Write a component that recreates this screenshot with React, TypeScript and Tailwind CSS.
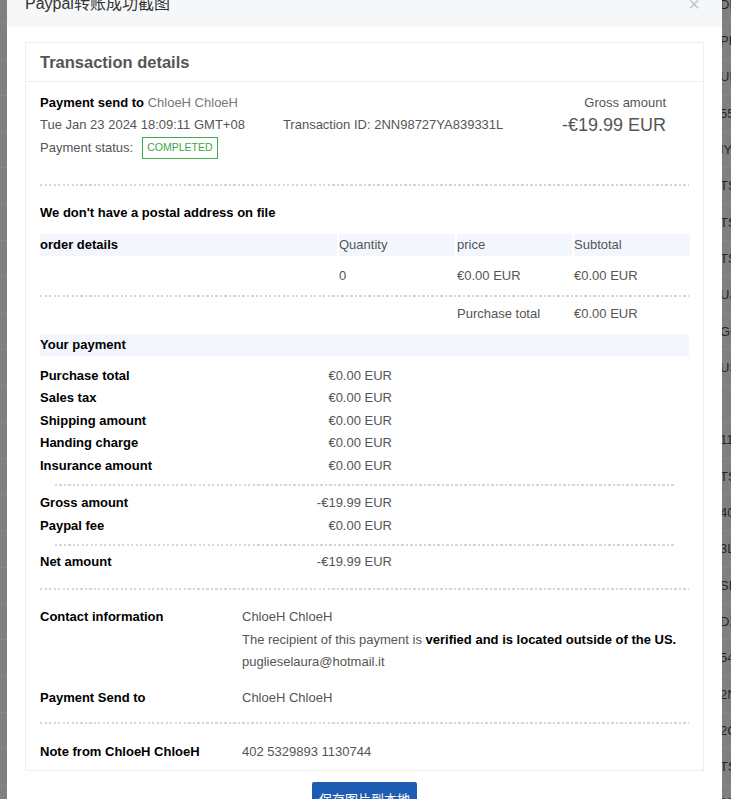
import React from "react";

const sideRows = [
  "DE", "PF", "UL", "55", "IY", "TS", "TS", "TS", "UJ", "GM", "US", "",
  "11", "TS", "40", "3L", "SE", "DX", "54", "2N", "2C", "TS", "11",
];

const paymentRows = [
  ["Purchase total", "€0.00 EUR"],
  ["Sales tax", "€0.00 EUR"],
  ["Shipping amount", "€0.00 EUR"],
  ["Handing charge", "€0.00 EUR"],
  ["Insurance amount", "€0.00 EUR"],
];

function Dotted({ inset = false, className = "" }: { inset?: boolean; className?: string }) {
  return (
    <div
      className={`h-[2px] bg-[repeating-linear-gradient(90deg,#d3d5da_0_2px,transparent_2px_4.5px)] ${inset ? "mx-[15px]" : ""} ${className}`}
    />
  );
}

function BackdropRows({ showText }: { showText: boolean }) {
  return (
    <div className="flex flex-col -mt-[13px]">
      {sideRows.map((t, i) => (
        <div
          key={i}
          className="h-[36.3px] shrink-0 flex items-center border-b border-[#878787] text-[13px] text-[#262626] -ml-[2px] whitespace-nowrap"
        >
          {showText ? t : ""}
        </div>
      ))}
    </div>
  );
}

export default function App() {
  return (
    <div className="flex h-[799px] overflow-hidden bg-[#808080] font-['Liberation_Sans','Noto_Sans_CJK_SC',sans-serif]">
      <div className="w-[7px] shrink-0 overflow-hidden">
        <BackdropRows showText={false} />
      </div>

      <div className="w-[715px] shrink-0 bg-white -mt-[20px] flex flex-col">
        {/* modal header */}
        <div className="h-[47px] shrink-0 bg-[#f6f7f9] flex items-center justify-between pl-[18px] pr-[22px]">
          <span className="text-[16px] text-[#333]">Paypal转账成功截图</span>
          <span className="text-[20px] leading-none text-[#c4c6ca]">×</span>
        </div>

        <div className="px-[18px] pt-[15px]">
          {/* card */}
          <div className="border border-[#eceef2]">
            <div className="h-[39px] border-b border-[#eceef2] px-[14px] flex items-center">
              <span className="text-[16.5px] font-bold text-[#555]">Transaction details</span>
            </div>

            <div className="px-[14px] pt-[10px] pb-[7px] text-[13px] text-[#555]">
              {/* summary */}
              <div className="flex">
                <div className="flex-1">
                  <div className="leading-[22px]">
                    <span className="font-bold text-black">Payment send to</span>{" "}
                    <span className="text-[#777]">ChloeH ChloeH</span>
                  </div>
                  <div className="leading-[22px] flex gap-[38px]">
                    <span>Tue Jan 23 2024 18:09:11 GMT+08</span>
                    <span>Transaction ID: 2NN98727YA839331L</span>
                  </div>
                  <div className="flex items-center gap-[9px] mt-[1px] h-[22px]">
                    <span>Payment status:</span>
                    <span className="border border-[#43ad4f] text-[#3aa846] text-[10.5px] px-[4px] h-[22px] flex items-center">
                      COMPLETED
                    </span>
                  </div>
                </div>
                <div className="text-right pr-[23px]">
                  <div className="leading-[22px]">Gross amount</div>
                  <div className="leading-[22px] text-[18px]">-€19.99 EUR</div>
                </div>
              </div>

              <Dotted className="mt-[25px]" />

              <div className="mt-[16px] leading-[22px] font-bold text-black">
                We don't have a postal address on file
              </div>

              {/* order table */}
              <div className="mt-[10px] grid grid-cols-[297px_116px_115px_116px] gap-x-[2px]">
                <div className="h-[22px] leading-[22px] bg-[#f4f6fd] font-bold text-black">order details</div>
                <div className="h-[22px] leading-[22px] bg-[#f4f6fd]">Quantity</div>
                <div className="h-[22px] leading-[22px] bg-[#f4f6fd]">price</div>
                <div className="h-[22px] leading-[22px] bg-[#f4f6fd]">Subtotal</div>
              </div>
              <div className="mt-[9px] grid grid-cols-[297px_116px_115px_116px] gap-x-[2px] leading-[22px]">
                <div />
                <div>0</div>
                <div>€0.00 EUR</div>
                <div>€0.00 EUR</div>
              </div>
              <Dotted className="mt-[8px]" />
              <div className="mt-[6px] grid grid-cols-[297px_116px_115px_116px] gap-x-[2px] leading-[22px]">
                <div />
                <div />
                <div>Purchase total</div>
                <div>€0.00 EUR</div>
              </div>

              <div className="mt-[9px] h-[22px] leading-[22px] bg-[#f4f6fd] font-bold text-black">
                Your payment
              </div>

              {/* payment breakdown */}
              <div className="mt-[9px] grid grid-cols-[200px_152px] leading-[22.4px]">
                {paymentRows.map(([label, value]) => (
                  <React.Fragment key={label}>
                    <div className="font-bold text-black">{label}</div>
                    <div className="text-right">{value}</div>
                  </React.Fragment>
                ))}
              </div>
              <Dotted inset className="mt-[7px]" />
              <div className="mt-[6px] grid grid-cols-[200px_152px] leading-[22.5px]">
                <div className="font-bold text-black">Gross amount</div>
                <div className="text-right">-€19.99 EUR</div>
                <div className="font-bold text-black">Paypal fee</div>
                <div className="text-right">€0.00 EUR</div>
              </div>
              <Dotted inset className="mt-[7px]" />
              <div className="mt-[5px] grid grid-cols-[200px_152px] leading-[22px]">
                <div className="font-bold text-black">Net amount</div>
                <div className="text-right">-€19.99 EUR</div>
              </div>

              <Dotted className="mt-[15px]" />

              {/* contact */}
              <div className="mt-[16px] grid grid-cols-[202px_1fr] leading-[22.5px]">
                <div className="font-bold text-black">Contact information</div>
                <div>
                  <div>ChloeH ChloeH</div>
                  <div>
                    The recipient of this payment is{" "}
                    <span className="font-bold text-black">verified and is located outside of the US.</span>
                  </div>
                  <div>puglieselaura@hotmail.it</div>
                </div>
              </div>
              <div className="mt-[13px] grid grid-cols-[202px_1fr] leading-[22px]">
                <div className="font-bold text-black">Payment Send to</div>
                <div>ChloeH ChloeH</div>
              </div>

              <Dotted className="mt-[13px]" />

              <div className="mt-[17px] grid grid-cols-[202px_1fr] leading-[22px]">
                <div className="font-bold text-black">Note from ChloeH ChloeH</div>
                <div>402 5329893 1130744</div>
              </div>
            </div>
          </div>

          <div className="flex justify-center mt-[11px]">
            <button className="h-[36px] px-[7px] rounded-[2px] bg-[#1d5cb3] text-white text-[13px]">
              保存图片到本地
            </button>
          </div>
        </div>
      </div>

      <div className="flex-1 overflow-hidden">
        <BackdropRows showText={true} />
      </div>
    </div>
  );
}
